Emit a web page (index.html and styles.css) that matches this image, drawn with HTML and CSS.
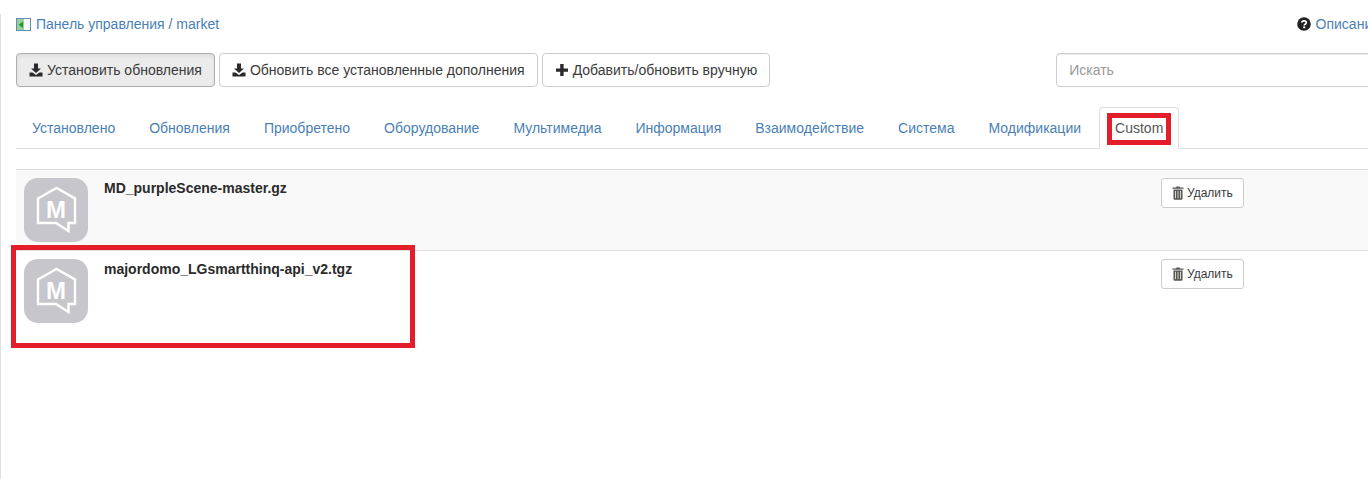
FILE: index.html
```html
<!DOCTYPE html>
<html lang="ru">
<head>
<meta charset="utf-8">
<title>market</title>
<link rel="stylesheet" href="styles.css">
</head>
<body>
<svg class="defs" width="0" height="0" aria-hidden="true">
  <symbol id="i-install" viewBox="0 0 14 14">
    <path d="M5 0.500h4v5h3l-5 4.500-5-4.500h3z" fill="currentColor"/>
    <path d="M0.500 9.500h3l3.500 2.500 3.500-2.500h3v4h-13z" fill="currentColor"/>
  </symbol>
  <symbol id="i-trash" viewBox="0 0 12 14">
    <path d="M4.500 0.500h3l0.500 1h3.500v1.300h-11v-1.300h3.500z" fill="#555"/>
    <path d="M1.500 3.500h9v9.500l-0.800 0.700h-7.400l-0.800-0.700z" fill="#555"/>
    <path d="M3.500 4.800v7.400M6 4.800v7.400M8.500 4.800v7.400" stroke="#d8d8c8" stroke-width="1" fill="none"/>
  </symbol>
</svg>
<div class="page">
  <header class="top">
    <a class="crumb" href="#">
      <svg class="crumb-icon" width="15" height="13" viewBox="0 0 15 13">
        <rect x="0.500" y="0.500" width="14" height="12" fill="#fff" stroke="#5f8fb5"/>
        <rect x="1" y="1" width="7" height="11" fill="#9ccf9c"/>
        <path d="M7 3.500v6.500L2.500 6.800z" fill="#1f9a35"/>
      </svg>
      <span>Панель управления / market</span>
    </a>
    <a class="help" href="#">
      <svg class="help-icon" width="14" height="14" viewBox="0 0 14 14">
        <circle cx="7" cy="7" r="6.800" fill="#222"/>
        <path d="M4.800 5.500C4.900 3.200 9.300 3.200 9.300 5.600 9.300 7.300 7.200 7 7.200 8.400" fill="none" stroke="#fff" stroke-width="1.700"/>
        <rect x="6.200" y="9.400" width="2" height="1.800" fill="#fff"/>
      </svg>
      <span>Описание</span>
    </a>
  </header>

  <div class="toolbar">
    <button class="btn btn-active" type="button"><svg class="btn-icon"><use href="#i-install"/></svg>Установить обновления</button>
    <button class="btn" type="button"><svg class="btn-icon"><use href="#i-install"/></svg>Обновить все установленные дополнения</button>
    <button class="btn" type="button"><svg class="btn-icon" viewBox="0 0 14 14"><path d="M5.200 1h3.400v4.400H13v3.300H8.600V13H5.200V8.700H1V5.400h4.200z" fill="currentColor"/></svg>Добавить/обновить вручную</button>
    <input class="search" type="text" placeholder="Искать">
  </div>

  <nav class="tabs">
    <a class="tab" href="#">Установлено</a>
    <a class="tab" href="#">Обновления</a>
    <a class="tab" href="#">Приобретено</a>
    <a class="tab" href="#">Оборудование</a>
    <a class="tab" href="#">Мультимедиа</a>
    <a class="tab" href="#">Информация</a>
    <a class="tab" href="#">Взаимодействие</a>
    <a class="tab" href="#">Система</a>
    <a class="tab" href="#">Модификации</a>
    <a class="tab tab-active" href="#">Custom<span class="mark mark-tab"></span></a>
  </nav>

  <div class="list">
    <div class="row row-odd">
      <svg class="logo" viewBox="0 0 64 64">
        <rect width="64" height="64" rx="14" fill="#c6c6cc"/>
        <path d="M14 20.500L32.500 10 51 20.500V45H44.500V53L32 45H14z" fill="none" stroke="#fff" stroke-width="2.400"/>
        <text x="32" y="40" text-anchor="middle" class="logo-letter">M</text>
      </svg>
      <div class="name">MD_purpleScene-master.gz</div>
      <div class="actions"><button class="btn btn-sm" type="button"><svg class="trash"><use href="#i-trash"/></svg>Удалить</button></div>
    </div>
    <div class="row">
      <svg class="logo" viewBox="0 0 64 64">
        <rect width="64" height="64" rx="14" fill="#c6c6cc"/>
        <path d="M14 20.500L32.500 10 51 20.500V45H44.500V53L32 45H14z" fill="none" stroke="#fff" stroke-width="2.400"/>
        <text x="32" y="40" text-anchor="middle" class="logo-letter">M</text>
      </svg>
      <div class="name">majordomo_LGsmartthinq-api_v2.tgz</div>
      <div class="actions"><button class="btn btn-sm" type="button"><svg class="trash"><use href="#i-trash"/></svg>Удалить</button></div>
      <span class="mark mark-row"></span>
    </div>
  </div>
</div>
</body>
</html>
```
FILE: styles.css
```css
html, body {
  margin: 0;
  height: 100%;
  overflow: hidden;
  background: #fff;
}
body {
  font-family: "Liberation Sans", Arial, sans-serif;
  font-size: 14px;
  line-height: 20px;
  color: #333;
}
.defs { position: absolute; }
a { color: #4a7fb5; text-decoration: none; }

.page {
  box-sizing: border-box;
  width: 1396px;
  height: 465px;
  margin-top: 14px;
  padding: 0 16px 0 15px;
  border-left: 1px solid #e2e2e2;
}

.top {
  display: flex;
  justify-content: space-between;
  height: 20px;
}
.crumb, .help { display: flex; align-items: center; gap: 5px; height: 20px; }
.crumb-icon { display: block; }
.help-icon { display: block; }

.toolbar {
  display: flex;
  gap: 4px;
  margin-top: 19px;
}
.btn {
  display: inline-flex;
  align-items: center;
  box-sizing: border-box;
  height: 34px;
  padding: 0 12px;
  font: inherit;
  color: #3a3a3a;
  background: #fff;
  border: 1px solid #ccc;
  border-radius: 4px;
  white-space: nowrap;
}
.btn-active {
  background: #ebebeb;
  border-color: #adadad;
  box-shadow: inset 0 2px 4px rgba(0,0,0,.06);
}
.btn-icon {
  width: 14px;
  height: 14px;
  margin-right: 4px;
  color: #2a2a2a;
}
.search {
  box-sizing: border-box;
  flex: 1;
  height: 34px;
  margin-left: 282px;
  padding: 0 12px;
  font: inherit;
  color: #555;
  border: 1px solid #ccc;
  border-radius: 4px;
  box-shadow: inset 0 1px 1px rgba(0,0,0,.075);
}
.search::placeholder { color: #999; opacity: 1; }

.tabs {
  display: flex;
  gap: 2px;
  height: 42px;
  margin-top: 20px;
  box-sizing: border-box;
  border-bottom: 1px solid #ddd;
  letter-spacing: 0.006px;
}
.tab {
  position: relative;
  box-sizing: border-box;
  height: 42px;
  padding: 10px 15px;
  border: 1px solid transparent;
  border-radius: 4px 4px 0 0;
}
.tab-active {
  color: #555;
  background: #fff;
  border-color: #ddd #ddd #fff;
}

.list {
  margin-top: 20px;
  border-top: 1px solid #ddd;
}
.row {
  position: relative;
  display: flex;
  height: 80px;
  box-sizing: border-box;
  padding: 8px 0 8px 8px;
}
.row + .row {
  height: 81px;
  border-top: 1px solid #ddd;
}
.row-odd { background: #f9f9f9; }
.logo {
  flex: none;
  width: 64px;
  height: 64px;
}
.logo-letter {
  font: bold 24px "Liberation Sans", Arial, sans-serif;
  fill: #fff;
}
.name {
  flex: 1;
  padding-left: 16px;
  font-size: 14px;
  line-height: 20px;
  font-weight: bold;
  color: #2a2a2a;
}
.actions {
  flex: none;
  width: 219px;
}
.btn-sm {
  height: 30px;
  padding: 0 10px;
  font-size: 12px;
  line-height: 18px;
  border-radius: 3px;
}
.trash {
  width: 12px;
  height: 14px;
  margin-right: 3px;
}

.mark {
  position: absolute;
  box-sizing: border-box;
  border: 5px solid #e31e2a;
  pointer-events: none;
}
.mark-tab {
  left: 7px;
  top: 5px;
  width: 64px;
  height: 32px;
}
.mark-row {
  left: -5px;
  top: -6px;
  width: 404px;
  height: 103px;
}
```
